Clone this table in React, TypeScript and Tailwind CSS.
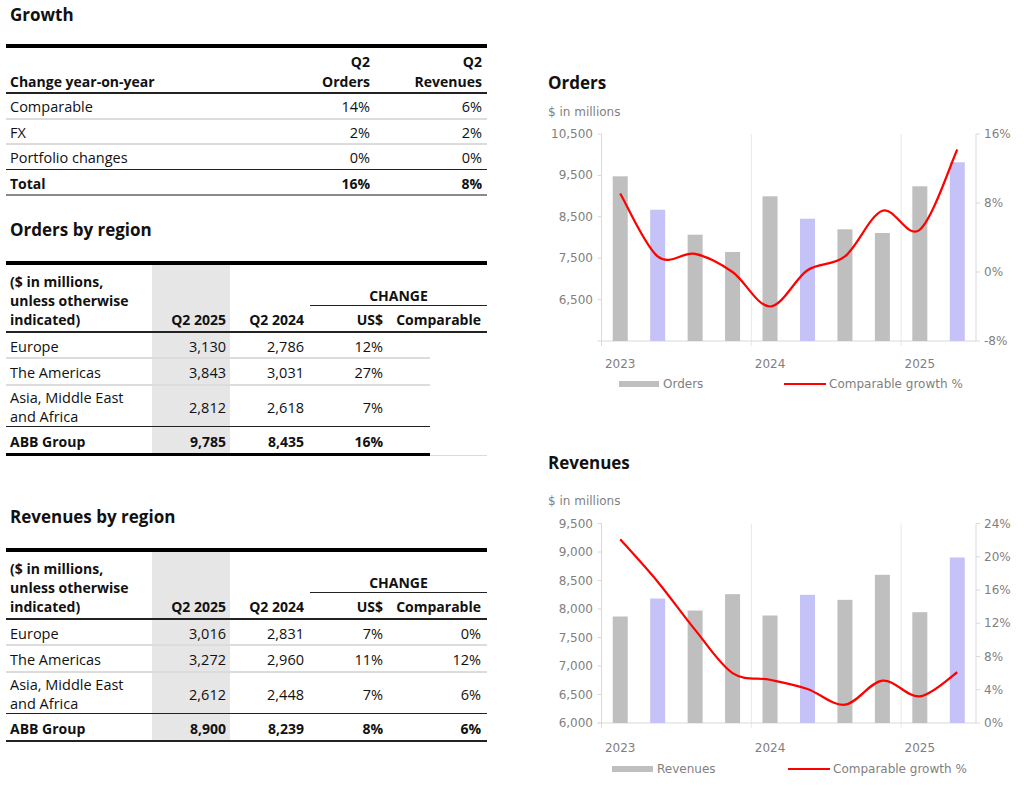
import React from 'react';

interface RegionRow {
    label: string[];
    q25: string;
    q24: string;
    usd: string;
    comp: string;
}

interface ChartDef {
    top: number;
    bottom: number;
    lmin: number;
    lmax: number;
    lticks: number[];
    rmin: number;
    rmax: number;
    rticks: number[];
    bars: number[];
    pct: number[];
    yearY: number;
    legendY: number;
    legendBar: [number, number];
    legendText: string;
    legendLine: [number, number];
}

const ordersRows: RegionRow[] = [
    { label: ['Europe'], q25: '3,130', q24: '2,786', usd: '12%', comp: '' },
    { label: ['The Americas'], q25: '3,843', q24: '3,031', usd: '27%', comp: '' },
    { label: ['Asia, Middle East', 'and Africa'], q25: '2,812', q24: '2,618', usd: '7%', comp: '' },
    { label: ['ABB Group'], q25: '9,785', q24: '8,435', usd: '16%', comp: '' },
];

const revenueRows: RegionRow[] = [
    { label: ['Europe'], q25: '3,016', q24: '2,831', usd: '7%', comp: '0%' },
    { label: ['The Americas'], q25: '3,272', q24: '2,960', usd: '11%', comp: '12%' },
    { label: ['Asia, Middle East', 'and Africa'], q25: '2,612', q24: '2,448', usd: '7%', comp: '6%' },
    { label: ['ABB Group'], q25: '8,900', q24: '8,239', usd: '8%', comp: '6%' },
];

const ordersChart: ChartDef = {
    top: 134,
    bottom: 341,
    lmin: 5500,
    lmax: 10500,
    lticks: [10500, 9500, 8500, 7500, 6500],
    rmin: -8,
    rmax: 16,
    rticks: [16, 8, 0, -8],
    bars: [9478, 8671, 8068, 7650, 8995, 8454, 8198, 8109, 9237, 9816],
    pct: [9.1, 1.8, 2.1, 0, -4, 0.2, 1.8, 7.1, 4.9, 14.2],
    yearY: 364,
    legendY: 384,
    legendBar: [619, 659],
    legendText: 'Orders',
    legendLine: [784, 826],
};

const revenuesChart: ChartDef = {
    top: 523.5,
    bottom: 723,
    lmin: 6000,
    lmax: 9500,
    lticks: [9500, 9000, 8500, 8000, 7500, 7000, 6500, 6000],
    rmin: 0,
    rmax: 24,
    rticks: [24, 20, 16, 12, 8, 4, 0],
    bars: [7868, 8184, 7973, 8260, 7886, 8249, 8161, 8600, 7944, 8904],
    pct: [22.1, 17, 11.2, 6, 5.2, 4.1, 2.2, 5.1, 3.2, 6.1],
    yearY: 748,
    legendY: 769,
    legendBar: [612, 653],
    legendText: 'Revenues',
    legendLine: [788, 830],
};

// catmull-rom -> cubic bezier, close to excel's smoothed line
const smooth = (p: number[][]) => {
    let d = `M${p[0][0]},${p[0][1]}`;
    for (let i = 0; i < p.length - 1; i++) {
        const p0 = p[i - 1] || p[i];
        const p1 = p[i];
        const p2 = p[i + 1];
        const p3 = p[i + 2] || p2;
        const c1 = [p1[0] + (p2[0] - p0[0]) / 6, p1[1] + (p2[1] - p0[1]) / 6];
        const c2 = [p2[0] - (p3[0] - p1[0]) / 6, p2[1] - (p3[1] - p1[1]) / 6];
        d += ` C${c1[0]},${c1[1]} ${c2[0]},${c2[1]} ${p2[0]},${p2[1]}`;
    }
    return d;
};

const fmt = (v: number) => v.toLocaleString('en-US');

const Chart = ({ c, viewBox, height }: { c: ChartDef; viewBox: string; height: number }) => {
    const L = 601.5;
    const R = 976;
    const slot = (R - L) / 10;
    const cx = (i: number) => L + slot * (i + 0.5);
    const yL = (v: number) => c.bottom - ((v - c.lmin) / (c.lmax - c.lmin)) * (c.bottom - c.top);
    const yR = (p: number) => c.bottom - ((p - c.rmin) / (c.rmax - c.rmin)) * (c.bottom - c.top);
    const pts = c.pct.map((p, i) => [cx(i), yR(p)]);
    const axis = '#d9d9d9';
    const label = '#7f7f7f';

    return (
        <svg width={480} height={height} viewBox={viewBox} className="block" fontFamily="'DejaVu Sans', sans-serif" fontSize={12}>
            {/* year gridlines */}
            {[4, 8].map(k => (
                <line key={k} x1={L + slot * k} x2={L + slot * k} y1={c.top} y2={c.bottom + 5} stroke="#e8e8e8" strokeWidth={1} />
            ))}
            <line x1={L} x2={L} y1={c.top} y2={c.bottom + 5} stroke={axis} />
            <line x1={R} x2={R} y1={c.top} y2={c.bottom} stroke={axis} />
            <line x1={L - 4} x2={R} y1={c.bottom} y2={c.bottom} stroke={axis} />
            {c.lticks.map(t => (
                <g key={t}>
                    <line x1={L - 4} x2={L} y1={yL(t)} y2={yL(t)} stroke={axis} />
                    <text x={593} y={yL(t)} textAnchor="end" dominantBaseline="central" fill={label}>
                        {fmt(t)}
                    </text>
                </g>
            ))}
            {c.rticks.map(t => (
                <g key={t}>
                    <line x1={R} x2={R + 4} y1={yR(t)} y2={yR(t)} stroke={axis} />
                    <text x={984} y={yR(t)} dominantBaseline="central" fill={label}>
                        {t}%
                    </text>
                </g>
            ))}
            {c.bars.map((v, i) => (
                <rect
                    key={i}
                    x={cx(i) - 7.5}
                    width={15}
                    y={yL(v)}
                    height={c.bottom - yL(v)}
                    fill={i % 4 === 1 ? '#c4c2f6' : '#bfbfbf'}
                />
            ))}
            <path d={smooth(pts)} fill="none" stroke="#ff0000" strokeWidth={2.2} strokeLinejoin="round" />
            {['2023', '2024', '2025'].map((y, k) => (
                <text key={y} x={cx(k * 4)} y={c.yearY} textAnchor="middle" dominantBaseline="central" fill={label}>
                    {y}
                </text>
            ))}
            <rect x={c.legendBar[0]} width={c.legendBar[1] - c.legendBar[0]} y={c.legendY - 3} height={6} fill="#bfbfbf" />
            <text x={c.legendBar[1] + 4} y={c.legendY} dominantBaseline="central" fill={label}>
                {c.legendText}
            </text>
            <line x1={c.legendLine[0]} x2={c.legendLine[1]} y1={c.legendY} y2={c.legendY} stroke="#ff0000" strokeWidth={2.2} />
            <text x={c.legendLine[1] + 3} y={c.legendY} dominantBaseline="central" fill={label}>
                Comparable growth %
            </text>
        </svg>
    );
};

const growthRows = [
    { label: 'Comparable', o: '14%', r: '6%', cls: 'h-[26px] border-b-2 border-[#dcdcdc]' },
    { label: 'FX', o: '2%', r: '2%', cls: 'h-[25px] border-b-2 border-[#dcdcdc]' },
    { label: 'Portfolio changes', o: '0%', r: '0%', cls: 'h-[25px] border-b border-[#222]' },
];

const GrowthTable = () => (
    <div className="w-[481px]">
        <div className="h-[4px] bg-black" />
        <div className="flex items-end h-[46px] border-b-2 border-[#222] leading-[20px] text-[14px] font-bold">
            <div className="flex-1 pl-[4px]">Change year-on-year</div>
            <div className="w-[80px] text-right">
                Q2
                <br />
                Orders
            </div>
            <div className="w-[117px] text-right pr-[5px]">
                Q2
                <br />
                Revenues
            </div>
        </div>
        {growthRows.map(r => (
            <div key={r.label} className={`flex items-center pt-[2px] text-[14.5px] ${r.cls}`}>
                <div className="flex-1 pl-[4px]">{r.label}</div>
                <div className="w-[80px] text-right">{r.o}</div>
                <div className="w-[117px] text-right pr-[5px]">{r.r}</div>
            </div>
        ))}
        <div className="flex items-center h-[26px] pt-[2px] text-[14px] font-bold border-b-2 border-[#8a8a8a]">
            <div className="flex-1 pl-[4px]">Total</div>
            <div className="w-[80px] text-right">16%</div>
            <div className="w-[117px] text-right pr-[5px]">8%</div>
        </div>
    </div>
);

const rowStyle = [
    { h: 'h-[26px]', border: 'border-b-2 border-[#dcdcdc]' },
    { h: 'h-[27px]', border: 'border-b-2 border-[#dcdcdc]' },
    { h: 'h-[41px]', border: 'border-b border-[#222]' },
];

const RegionTable = ({ rows, partial }: { rows: RegionRow[]; partial?: boolean }) => (
    <div className="w-[481px]">
        <div className="h-[4px] bg-black" />
        <div className="flex h-[68px] border-b-2 border-[#222] leading-[19px] text-[14px] font-bold">
            <div className="w-[146px] pl-[4px] pb-[2.5px] flex flex-col justify-end">
                <div>($ in millions,</div>
                <div>unless otherwise</div>
                <div>indicated)</div>
            </div>
            <div className="w-[78px] bg-[#e6e6e7] pr-[4px] pb-[2.5px] flex flex-col justify-end text-right">Q2 2025</div>
            <div className="w-[80px] pr-[6px] pb-[2.5px] flex flex-col justify-end text-right">Q2 2024</div>
            <div className="w-[177px] pb-[2.5px] flex flex-col justify-end">
                <div className="text-center border-b border-[#222]">CHANGE</div>
                <div className="flex mt-[4px]">
                    <div className="w-[77px] pr-[4px] text-right">US$</div>
                    <div className="w-[100px] pr-[6px] text-right">Comparable</div>
                </div>
            </div>
        </div>
        {rows.map((r, i) => {
            const last = i === rows.length - 1;
            const cls = last
                ? partial
                    ? 'h-[29px] border-b-[3px] border-black'
                    : 'h-[28px] border-b-2 border-[#222]'
                : `${rowStyle[i].h} ${rowStyle[i].border}`;
            return (
                <div key={r.label.join(' ')} className="flex items-end">
                    <div
                        className={`flex ${partial ? 'w-[424px]' : 'w-[481px]'} ${cls} ${
                            last ? 'font-bold text-[14px]' : 'text-[14.5px]'
                        } leading-[19px]`}
                    >
                        <div className="w-[146px] pl-[4px] pt-[2px] flex flex-col justify-center">
                            {r.label.map(l => (
                                <div key={l}>{l}</div>
                            ))}
                        </div>
                        <div className="w-[78px] bg-[#e6e6e7] pr-[4px] pt-[2px] flex items-center justify-end">{r.q25}</div>
                        <div className="w-[80px] pr-[6px] pt-[2px] flex items-center justify-end">{r.q24}</div>
                        <div className="w-[77px] pr-[4px] pt-[2px] flex items-center justify-end">{r.usd}</div>
                        {!partial && <div className="w-[100px] pr-[6px] pt-[2px] flex items-center justify-end">{r.comp}</div>}
                    </div>
                    {partial && last && <div className="w-[57px] border-b border-[#dcdcdc]" />}
                </div>
            );
        })}
    </div>
);

const App = () => {
    return (
        <div className="w-[1024px] h-[791px] bg-white flex font-['Open_Sans',sans-serif] text-[#111]">
            <div className="w-[481px] ml-[6px]">
                <h2 className="h-[28px] leading-[28px] pt-[1px] text-[17px] font-bold pl-[4px]">Growth</h2>
                <div className="mt-[16px]">
                    <GrowthTable />
                </div>
                <h2 className="mt-[20px] h-[28px] leading-[28px] text-[17px] font-bold pl-[4px]">Orders by region</h2>
                <div className="mt-[17px]">
                    <RegionTable rows={ordersRows} partial />
                </div>
                <h2 className="mt-[47px] h-[28px] leading-[28px] text-[17px] font-bold pl-[4px]">Revenues by region</h2>
                <div className="mt-[17px]">
                    <RegionTable rows={revenueRows} />
                </div>
            </div>
            <div className="ml-[53px] w-[480px]">
                <h2 className="mt-[69px] h-[28px] leading-[28px] text-[17px] font-bold pl-[8px]">Orders</h2>
                <p className="mt-[7px] h-[16px] leading-[16px] text-[12px] pl-[8px] text-[#7f7f7f] font-['DejaVu_Sans',sans-serif]">
                    $ in millions
                </p>
                <div className="mt-[2px]">
                    <Chart c={ordersChart} viewBox="540 122 480 273" height={273} />
                </div>
                <h2 className="mt-[54px] h-[28px] leading-[28px] text-[17px] font-bold pl-[8px]">Revenues</h2>
                <p className="mt-[16px] h-[16px] leading-[16px] text-[12px] pl-[8px] text-[#7f7f7f] font-['DejaVu_Sans',sans-serif]">
                    $ in millions
                </p>
                <div className="mt-[2px]">
                    <Chart c={revenuesChart} viewBox="540 511 480 275" height={275} />
                </div>
            </div>
        </div>
    );
};

export default App;
